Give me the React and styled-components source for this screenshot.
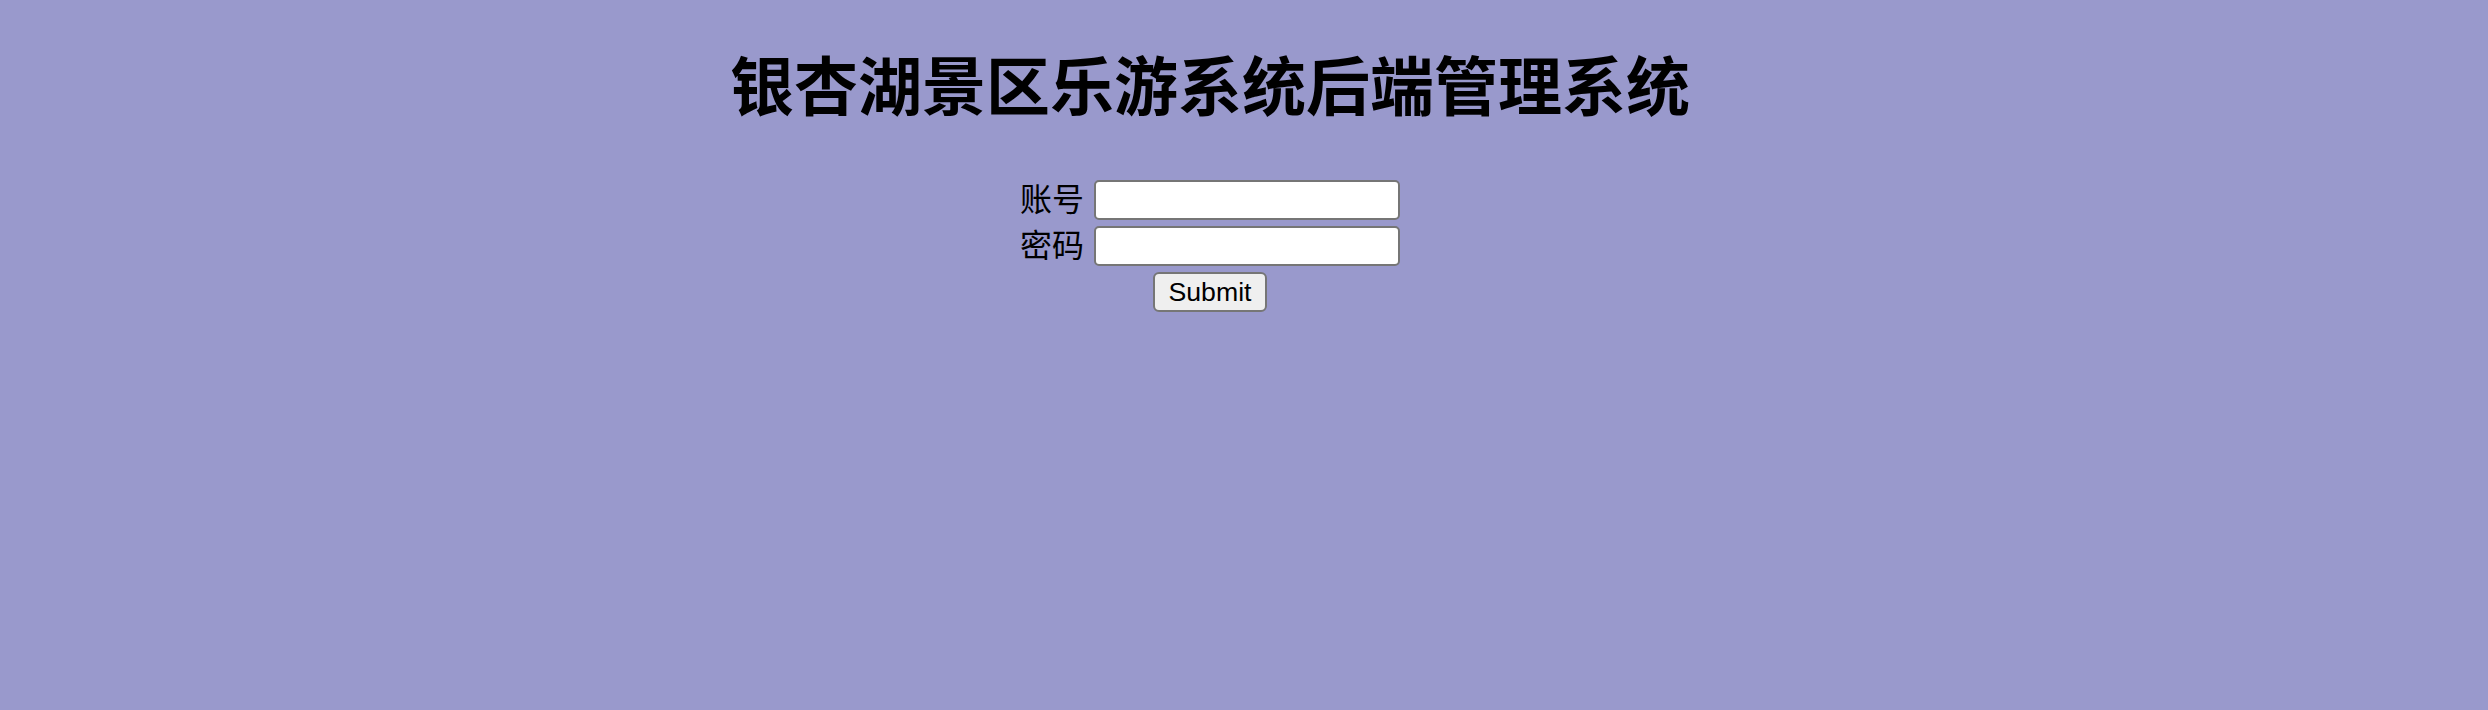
import React from "react";
import styled, { createGlobalStyle } from "styled-components";

const GlobalStyle = createGlobalStyle`
  html, body {
    margin: 0;
    padding: 0;
    background: #9999cc;
  }
  body {
    font-family: "Noto Sans CJK SC", "Noto Sans", sans-serif;
    color: #000;
  }
`;

const Page = styled.div`
  min-height: 710px;
  box-sizing: border-box;
  padding: 36px 84px 0 16px;
  background: #9999cc;
`;

const Title = styled.h1`
  margin: 0 0 49px;
  text-align: center;
  font-family: "Noto Sans CJK SC", sans-serif;
  font-weight: 700;
  font-size: 64px;
  line-height: 92px;
`;

const Form = styled.form`
  display: flex;
  flex-direction: column;
  align-items: center;
`;

const Row = styled.div`
  display: flex;
  align-items: center;
  gap: 10px;
  height: 46px;
`;

const Label = styled.label`
  font-family: "Noto Sans CJK SC", sans-serif;
  font-size: 32px;
  line-height: 46px;
  width: 64px;
  margin-top: -6px;
`;

const Input = styled.input`
  box-sizing: border-box;
  width: 306px;
  height: 40px;
  margin: 0;
  padding: 2px 4px;
  background: #fff;
  border: 2px solid #767676;
  border-radius: 5px;
  font-size: 26px;
  font-family: "Liberation Sans", Arial, sans-serif;
`;

const ButtonRow = styled.div`
  display: flex;
  align-items: center;
  justify-content: center;
  height: 46px;
`;

const Button = styled.button`
  box-sizing: border-box;
  width: 114px;
  height: 40px;
  margin: 0;
  padding: 0 10px;
  background: #efefef;
  border: 2px solid #767676;
  border-radius: 6px;
  font-family: "Liberation Sans", Arial, sans-serif;
  font-size: 26.67px;
  color: #000;
`;

export default function App() {
  return (
    <>
      <GlobalStyle />
      <Page>
        <Title>银杏湖景区乐游系统后端管理系统</Title>
        <Form onSubmit={(e) => e.preventDefault()}>
          <Row>
            <Label htmlFor="account">账号</Label>
            <Input id="account" type="text" />
          </Row>
          <Row>
            <Label htmlFor="password">密码</Label>
            <Input id="password" type="password" />
          </Row>
          <ButtonRow>
            <Button type="submit">Submit</Button>
          </ButtonRow>
        </Form>
      </Page>
    </>
  );
}
